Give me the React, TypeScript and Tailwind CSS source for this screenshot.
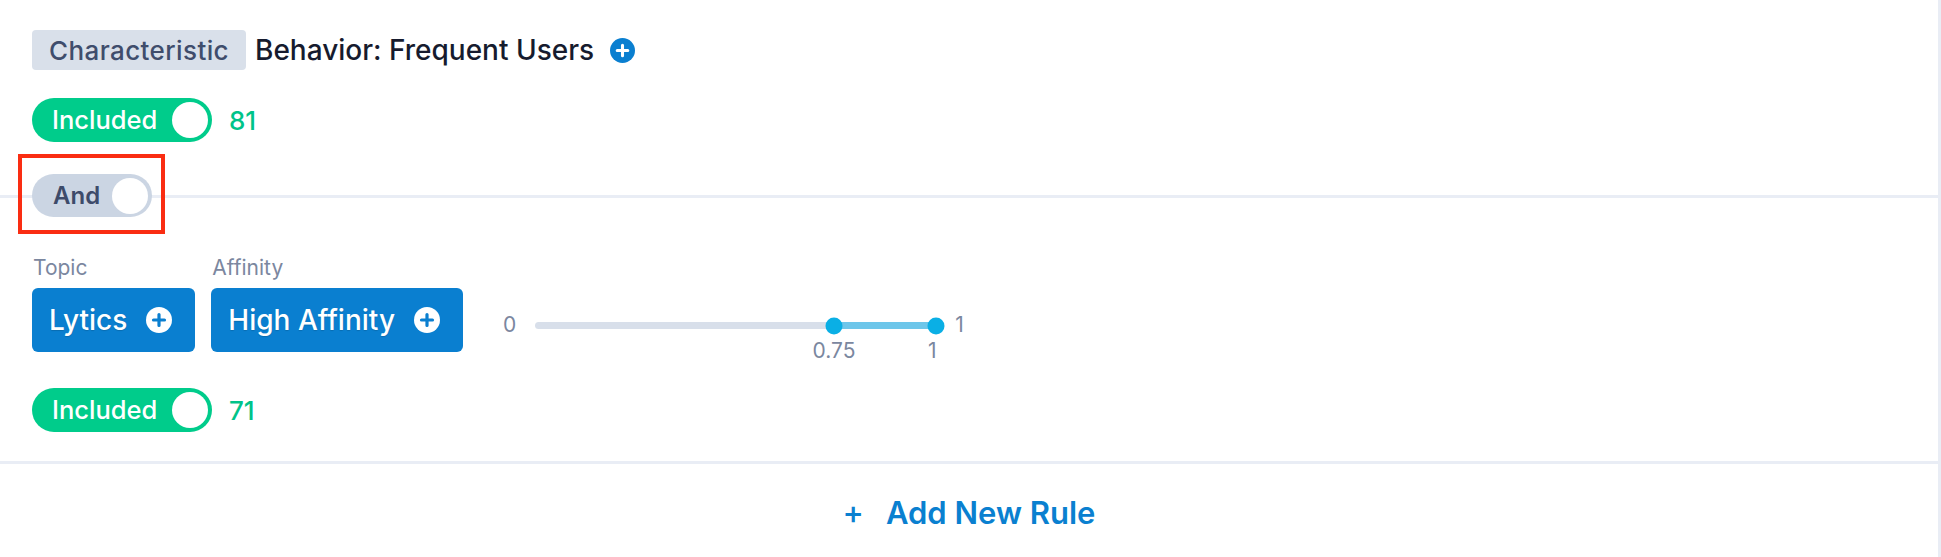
import React from "react";

function PlusCircle({ bg, fg, size }: { bg: string; fg: string; size: number }) {
  return (
    <svg width={size} height={size} viewBox="0 0 26 26">
      <circle cx="13" cy="13" r="13" fill={bg} />
      <path d="M13 7.5v11M7.5 13h11" stroke={fg} strokeWidth="3.2" strokeLinecap="round" />
    </svg>
  );
}

function Included({ count }: { count: number }) {
  return (
    <div className="flex items-center gap-[17px]">
      <div className="flex h-[44px] w-[180px] items-center justify-between rounded-full bg-[#00cc8b] pl-[20px] pr-[4px]">
        <span className="text-[25.5px] font-medium text-white">Included</span>
        <span className="h-[36px] w-[36px] rounded-full bg-white" />
      </div>
      <span className="text-[26px] font-medium text-[#00c389]">{count}</span>
    </div>
  );
}

function ChipButton({ label, text }: { label: string; text: string }) {
  return (
    <div className="flex flex-col gap-[8px]">
      <span className="pl-[1px] text-[21px] leading-[24px] text-[#7b879f]">{label}</span>
      <button className="flex h-[64px] items-center gap-[19px] rounded-[6px] bg-[#0a7fd0] pl-[17px] pr-[23px] text-[28px] font-medium text-white [text-shadow:0_1px_1px_rgba(0,0,0,0.15)]">
        {text}
        <PlusCircle bg="#ffffff" fg="#0a7fd0" size={26} />
      </button>
    </div>
  );
}

function RangeSlider() {
  return (
    <div className="mt-[59px] flex items-start gap-[19px] text-[21px] text-[#7b879f]">
      <span className="leading-[20px]">0</span>
      <div className="relative mt-[7px] h-[7px] w-[401px] rounded-full bg-[#d8dfea]">
        <div className="absolute inset-y-0 left-[74.5%] right-0 bg-[#6dc6ea]" />
        <span className="absolute left-[74.5%] top-1/2 h-[17px] w-[17px] -translate-x-1/2 -translate-y-1/2 rounded-full bg-[#0aafe5]" />
        <span className="absolute left-full top-1/2 h-[17px] w-[17px] -translate-x-1/2 -translate-y-1/2 rounded-full bg-[#0aafe5]" />
        <span className="absolute left-[74.5%] top-[17px] -translate-x-1/2 leading-[24px]">0.75</span>
        <span className="absolute left-[99%] top-[17px] -translate-x-1/2 leading-[24px]">1</span>
      </div>
      <span className="leading-[20px]">1</span>
    </div>
  );
}

export default function App() {
  return (
    <div className="min-h-[557px] w-full border-r-[3px] border-[#e9edf5] bg-white font-[Inter,'Liberation_Sans',sans-serif]">
      {/* characteristic rule */}
      <div className="px-[32px] pt-[30px]">
        <div className="flex h-[40px] items-center gap-[9px]">
          <span className="flex h-[40px] items-center rounded-[4px] bg-[#d9e0ea] px-[17px] text-[26px] font-medium tracking-[0.4px] text-[#3f4d6c]">
            Characteristic
          </span>
          <span className="text-[28px] font-medium leading-none text-[#161b2e]">Behavior: Frequent Users</span>
          <span className="ml-[7px] flex">
            <PlusCircle bg="#0a7fd0" fg="#ffffff" size={25} />
          </span>
        </div>
        <div className="mt-[28px]">
          <Included count={81} />
        </div>
      </div>

      {/* and / or switch sitting on the divider */}
      <div className="relative mt-[32px] flex h-[43px] items-center px-[32px]">
        <div className="absolute inset-x-0 top-[21px] h-[3px] bg-[#e9edf5]" />
        <div className="relative flex h-[43px] w-[120px] items-center justify-between rounded-full bg-[#cbd5e3] pl-[21px] pr-[4px]">
          <span className="text-[24px] font-semibold text-[#3d4b6a]">And</span>
          <span className="h-[36px] w-[36px] rounded-full bg-white" />
          <div className="pointer-events-none absolute -left-[14px] -top-[20px] h-[80px] w-[147px] border-[4px] border-[#fa2d12]" />
        </div>
      </div>

      {/* topic rule */}
      <div className="border-b-[3px] border-[#e9edf5] px-[32px] pb-[29px] pt-[39px]">
        <div className="flex items-start gap-[16px]">
          <ChipButton label="Topic" text="Lytics" />
          <ChipButton label="Affinity" text="High Affinity" />
          <div className="ml-[24px] flex">
            <RangeSlider />
          </div>
        </div>
        <div className="mt-[36px]">
          <Included count={71} />
        </div>
      </div>

      <div className="flex h-[93px] items-center justify-center bg-white pt-[5px]">
        <button className="flex items-center gap-[22px] text-[31px] font-semibold text-[#0a80d0]">
          <span className="text-[32px] font-medium">+</span>
          Add New Rule
        </button>
      </div>
    </div>
  );
}
